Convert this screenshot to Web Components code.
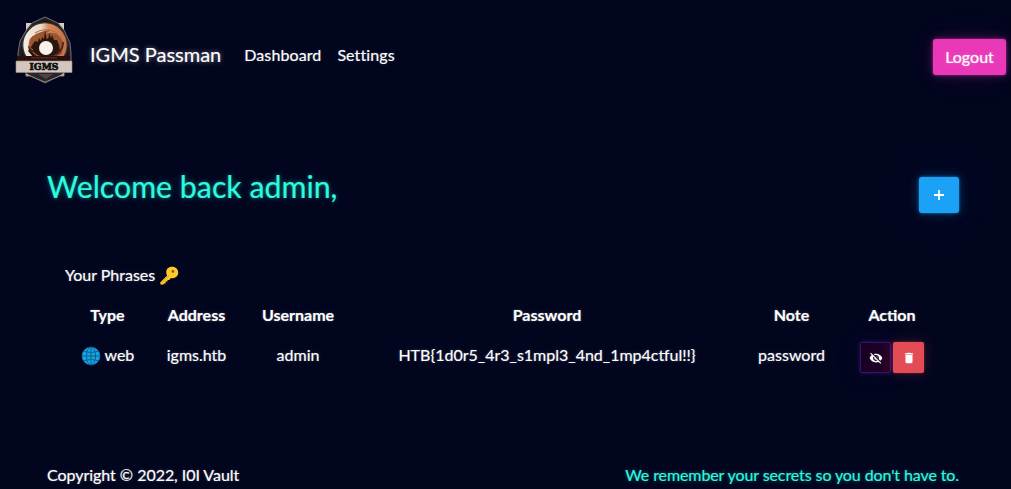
<!DOCTYPE html>
<html lang="en">
<head>
<meta charset="utf-8">
<title>IGMS Passman</title>
<style>
body{margin:0;background:#02051e;color:#fff;font:16px/24px Lato,"Open Sans",sans-serif;height:489px;overflow:hidden;-webkit-text-stroke:.15px}
</style>
</head>
<body>
<vault-page></vault-page>
<script>
function element(name, html) {
  const template = document.createElement('template');
  template.innerHTML = html;
  customElements.define(name, class extends HTMLElement {
    constructor() {
      super();
      this.attachShadow({mode: 'open'}).append(template.content.cloneNode(true));
    }
  });
}

element('brand-badge', `
<style>:host{display:block;width:58px;height:68px}svg{display:block}text{font:700 9px "DejaVu Serif",serif}</style>
<svg width="58" height="68" viewBox="0 0 58 68">
  <defs>
    <linearGradient id="sky"><stop offset="0" stop-color="#f3eee8"/><stop offset=".42" stop-color="#e8d8ca"/><stop offset=".58" stop-color="#d88a5a"/><stop offset="1" stop-color="#c07042"/></linearGradient>
    <filter id="soft" x="-10%" y="-10%" width="120%" height="120%"><feGaussianBlur stdDeviation=".6"/></filter>
  </defs>
  <path d="M11 7h38v53H11z" fill="#d8cbc2"/>
  <path d="M30 1 43 7 49 14 55 27 56 37V51L46 59 30 67 14 59 3 51V37L5 25 12 13 17 7z" fill="#252125" stroke="#8f8582" stroke-width=".8"/>
  <path d="M30 3 42 9 50 19 54 34V50L30 64 6 50V34L9 20 17 10z" fill="#19171b"/>
  <g filter="url(#soft)">
    <circle cx="30" cy="29" r="22.3" fill="url(#sky)" stroke="#3b3030" stroke-width="1.2"/>
    <path d="M15 23C20 17 27 15 36 14L30 18C38 15 45 18 48 26L47 38 35 44 17 40 13 32z" fill="#9a5733"/>
    <path d="M18 28l2-3 3 1 1-4 2 3 1-4 2 2 1-9 1.5 9 2-1 .5-5 2 5 1-3 2 5 3 0 2 5 1 6-7 7-18 1-7-8z" fill="#2b130f"/>
    <path d="M14 30c4 10 13 13 21 11 9-2 13-8 13-15" fill="none" stroke="#592719" stroke-width="2"/>
    <path d="M18 20c-5 4-5 11 0 14M20 17c8-5 17-4 23 1M18 36c5 6 15 8 23 4" fill="none" stroke="#b9683c"/>
    <circle cx="31" cy="32" r="7" fill="#f8f1e9"/>
  </g>
  <path d="M2 40h53v5H2z" fill="#260f0d"/><path d="M16 41h26v1.5H16z" fill="#552619"/>
  <path d="M1 45h56V56.5H1z" fill="#d2c6bf" stroke="#9b8d86" stroke-width=".6"/>
  <path d="M10 57h38L30 65z" fill="#292629"/><path d="M23 58h15l-7 5z" fill="#4d4645"/>
  <path d="M11 57v3h4l15 6 15-6h4v-3" fill="none" stroke="#8c7f79"/>
  <text x="29" y="53.8" text-anchor="middle" textLength="29" lengthAdjust="spacingAndGlyphs" fill="#111" stroke="#111" stroke-width=".7">IGMS</text>
</svg>`);

element('nav-bar', `
<style>
:host{display:flex;height:112px;padding:0 5px 0 15px;box-sizing:border-box;align-items:center}
.brand{font-size:20px;line-height:30px;text-shadow:0 0 5px #ffffff80;margin:0 0 4px 17px}
nav{display:flex;gap:16px;margin:0 0 2px 23px;font-variant-ligatures:none;letter-spacing:.1px;text-shadow:0 0 3px #ffffff30}
brand-badge{position:relative;top:-6px}
.logout{margin-left:auto}
glow-button{margin-top:2px}
</style>
<brand-badge></brand-badge><span class="brand">IGMS Passman</span>
<nav><span>Dashboard</span><span>Settings</span></nav>
<glow-button class="logout">Logout</glow-button>`);

element('glow-button', `
<style>
:host{display:flex;align-items:center;justify-content:center;box-sizing:border-box;width:73px;height:36px;border-radius:3px;background:#ea39b8;text-shadow:0 0 3px #ffffff50;box-shadow:0 0 3px #ea39b8aa,0 0 12px #ea39b84d,0 0 40px #ea39b810}
:host(.add){width:40px;background:#1ba2f6;box-shadow:0 0 3px #1ba2f6bb,0 0 12px #1ba2f64d,0 0 45px #1ba2f614}
:host(.hide){width:31px;height:31px;border:1px solid #35146a;border-radius:2px;background:linear-gradient(110deg,#160022,#250028);box-shadow:0 0 4px #51209b88,0 0 28px #44209924}
:host(.delete){width:31px;height:31px;border-radius:2px;background:#e44c55;box-shadow:0 0 3px #e44c5566,0 0 14px #e44c5540}
</style><slot></slot>`);

element('emoji-icon', `
<style>:host{display:inline-block;width:20px;height:20px;vertical-align:-5px}svg{display:block}.globe{display:none}:host([kind=globe]) .globe{display:block}:host([kind=globe]) .key{display:none}</style>
<svg class="key" width="20" height="20" viewBox="0 0 20 20"><path fill="#ffc928" fill-rule="evenodd" d="M8.5 2.5c2.2-2.4 7-2.4 9.1 0 2.2 2.3 2.2 6 0 8-1.6 1.7-4 2-5.7 1.4L10.2 14H8.5v1.5H6.6v2H5l-1 1.2-2.3-.1-.6-2.1 7-7C6.8 7.1 6.9 4.2 8.5 2.5z"/><path d="m2.2 17.2 7.5-7.5" stroke="#e29c18" stroke-width="1"/><circle cx="13.9" cy="5.4" r="1.3" fill="#785529"/></svg>
<svg class="globe" width="20" height="20" viewBox="0 0 20 20" fill="none" stroke="#075b86" stroke-width=".9"><circle cx="10" cy="10" r="9" fill="#16a4e6" stroke="#0e79ac" stroke-width=".6"/><ellipse cx="10" cy="10" rx="4.5" ry="9"/><path d="M10 1v18M1 10h18M3 5.2c4 1.6 10 1.6 14 0M3 14.8c4-1.6 10-1.6 14 0"/></svg>`);

element('line-icon', `
<style>:host{display:block;width:14px;height:14px}svg{display:none;width:14px;height:14px;fill:#fff}:host([kind=plus]) .plus,:host([kind=eye]) .eye,:host([kind=trash]) .trash{display:block}</style>
<svg class="plus" viewBox="0 0 14 14"><path d="M6.1 2h1.8v4.1H12v1.8H7.9V12H6.1V7.9H2V6.1h4.1z"/></svg>
<svg class="eye" viewBox="0 0 24 24"><path d="M12 7c2.76 0 5 2.24 5 5 0 .65-.13 1.26-.36 1.83l2.92 2.92c1.51-1.26 2.7-2.89 3.43-4.75-1.73-4.39-6-7.5-11-7.5-1.4 0-2.74.25-3.98.7l2.16 2.16C10.74 7.13 11.35 7 12 7zM2 4.27l2.74 2.74C3.08 8.3 1.78 10.02 1 12c1.73 4.39 6 7.5 11 7.5 1.55 0 3.03-.3 4.38-.84L19.73 22 21 20.73 3.27 3 2 4.27zm5.53 5.53 1.55 1.55c-.05.21-.08.43-.08.65 0 1.66 1.34 3 3 3 .22 0 .44-.03.65-.08l1.55 1.55c-.67.33-1.41.53-2.2.53-2.76 0-5-2.24-5-5 0-.79.2-1.53.53-2.2zm4.31-.78 3.15 3.15.02-.16c0-1.66-1.34-3-3-3l-.17.01z"/></svg>
<svg class="trash" viewBox="0 0 24 24"><path d="M6 19c0 1.1.9 2 2 2h8c1.1 0 2-.9 2-2V7H6v12zM19 4h-3.5l-1-1h-5l-1 1H5v2h14V4z"/></svg>`);

element('phrase-table', `
<style>
:host{display:block;padding:17px 18px 0;text-shadow:0 0 3px #ffffff40}
.title{height:24px}
.grid{display:grid;grid-template-columns:85px 93px 110px 388px 101px 100px;grid-template-rows:40px 40px;align-items:center;text-align:center;margin-top:8px}
b{font-weight:700}
.actions{display:flex;gap:2px;justify-content:center;padding-top:5px}
</style>
<div class="title">Your Phrases <emoji-icon></emoji-icon></div>
<div class="grid">
<b>Type</b><b>Address</b><b>Username</b><b>Password</b><b>Note</b><b>Action</b>
<span><emoji-icon kind="globe"></emoji-icon> web</span><span>igms.htb</span><span>admin</span><span>HTB{1d0r5_4r3_s1mpl3_4nd_1mp4ctful!!}</span><span>password</span>
<div class="actions"><glow-button class="hide"><line-icon kind="eye"></line-icon></glow-button><glow-button class="delete"><line-icon kind="trash"></line-icon></glow-button></div>
</div>`);

element('vault-page', `
<style>
:host{display:block;height:489px;background:#02051e}
main{padding:55px 47px 0}
header{display:flex;justify-content:space-between;height:79px}
h1{margin:0;font-weight:400;font-size:30.3px;line-height:38px;color:#2dfbe0;text-shadow:0 0 4px #2dfbe060,0 0 12px #2dfbe030}
.add{margin:10px 5px 0 0}
footer{display:flex;justify-content:space-between;padding:0 52px 0 47px;margin-top:88px;letter-spacing:-.04px;text-shadow:0 0 3px #ffffff40}
.tag{color:#2dfbe0;letter-spacing:-.1px;text-shadow:0 0 4px #2dfbe060}
</style>
<nav-bar></nav-bar>
<main><header><h1>Welcome back admin,</h1><glow-button class="add"><line-icon kind="plus"></line-icon></glow-button></header>
<phrase-table></phrase-table></main>
<footer><span>Copyright © 2022, I0I Vault</span><span class="tag">We remember your secrets so you don't have to.</span></footer>`);
</script>
</body>
</html>
